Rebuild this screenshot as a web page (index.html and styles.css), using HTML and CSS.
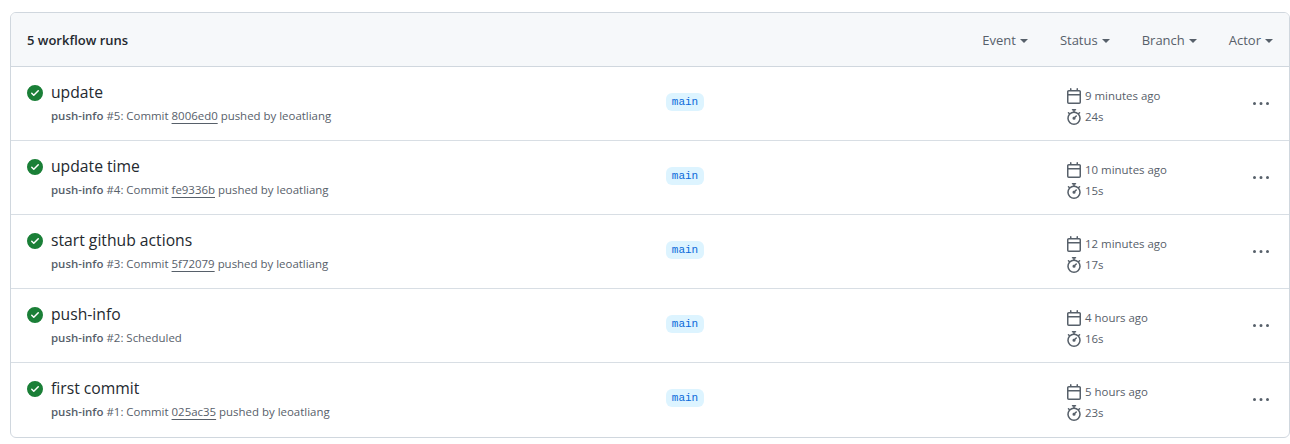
FILE: index.html
```html
<!DOCTYPE html>
<html lang="en">
<head>
<meta charset="utf-8">
<title>Workflow runs</title>
<link rel="stylesheet" href="styles.css">
</head>
<body>
<svg class="defs" width="0" height="0" aria-hidden="true">
  <symbol id="i-check" viewBox="0 0 16 16"><path d="M8 16A8 8 0 1 1 8 0a8 8 0 0 1 0 16Zm3.78-9.72a.751.751 0 0 0-.018-1.042.751.751 0 0 0-1.042-.018L6.75 9.19 5.28 7.72a.751.751 0 0 0-1.042.018.751.751 0 0 0-.018 1.042l2 2a.75.75 0 0 0 1.06 0Z"/></symbol>
  <symbol id="i-cal" viewBox="0 0 16 16"><path d="M4.75 0a.75.75 0 0 1 .75.75V2h5V.75a.75.75 0 0 1 1.5 0V2h1.25c.966 0 1.75.784 1.75 1.75v10.5A1.75 1.75 0 0 1 13.25 16H2.75A1.75 1.75 0 0 1 1 14.25V3.75C1 2.784 1.784 2 2.75 2H4V.75A.75.75 0 0 1 4.75 0ZM2.5 7.5v6.75c0 .138.112.25.25.25h10.5a.25.25 0 0 0 .25-.25V7.5Zm10.75-4H2.75a.25.25 0 0 0-.25.25V6h11V3.75a.25.25 0 0 0-.25-.25Z"/></symbol>
  <symbol id="i-watch" viewBox="0 0 16 16"><path d="M5.75.75A.75.75 0 0 1 6.5 0h3a.75.75 0 0 1 0 1.5h-.75v1l-.001.041a6.724 6.724 0 0 1 3.464 1.435l.007-.006.75-.75a.75.75 0 1 1 1.06 1.06l-.75.75-.006.007a6.75 6.75 0 1 1-10.548 0L2.72 5.03l-.75-.75a.751.751 0 0 1 .018-1.042.751.751 0 0 1 1.042-.018l.75.75.007.006A6.72 6.72 0 0 1 7.25 2.541a.49.49 0 0 1 0-.041v-1H6.5a.75.75 0 0 1-.75-.75ZM8 14.5a5.25 5.25 0 1 0-.001-10.501A5.25 5.25 0 0 0 8 14.5Zm.389-6.7 1.33-1.33a.75.75 0 1 1 1.061 1.06L9.45 8.861A1.503 1.503 0 0 1 8 10.75a1.499 1.499 0 1 1 .389-2.95Z"/></symbol>
  <symbol id="i-kebab" viewBox="0 0 16 16"><path d="M8 9a1.5 1.5 0 1 0 0-3 1.5 1.5 0 0 0 0 3ZM1.5 9a1.5 1.5 0 1 0 0-3 1.5 1.5 0 0 0 0 3Zm13 0a1.5 1.5 0 1 0 0-3 1.5 1.5 0 0 0 0 3Z"/></symbol>
</svg>
<section class="box">
  <header class="box-head">
    <h2 class="count">5 workflow runs</h2>
    <nav class="filters">
      <span class="filter">Event<i class="caret"></i></span>
      <span class="filter">Status<i class="caret"></i></span>
      <span class="filter">Branch<i class="caret"></i></span>
      <span class="filter">Actor<i class="caret"></i></span>
    </nav>
  </header>

  <article class="run">
    <svg class="status"><use href="#i-check"/></svg>
    <div class="info">
      <div class="title">update</div>
      <div class="meta"><b>push-info</b> #5: Commit <a class="sha">8006ed0</a> pushed by leoatliang</div>
    </div>
    <div class="branch-cell"><span class="branch">main</span></div>
    <div class="times">
      <div class="time"><svg class="ico"><use href="#i-cal"/></svg>9 minutes ago</div>
      <div class="time"><svg class="ico"><use href="#i-watch"/></svg>24s</div>
    </div>
    <svg class="kebab"><use href="#i-kebab"/></svg>
  </article>

  <article class="run">
    <svg class="status"><use href="#i-check"/></svg>
    <div class="info">
      <div class="title">update time</div>
      <div class="meta"><b>push-info</b> #4: Commit <a class="sha">fe9336b</a> pushed by leoatliang</div>
    </div>
    <div class="branch-cell"><span class="branch">main</span></div>
    <div class="times">
      <div class="time"><svg class="ico"><use href="#i-cal"/></svg>10 minutes ago</div>
      <div class="time"><svg class="ico"><use href="#i-watch"/></svg>15s</div>
    </div>
    <svg class="kebab"><use href="#i-kebab"/></svg>
  </article>

  <article class="run">
    <svg class="status"><use href="#i-check"/></svg>
    <div class="info">
      <div class="title">start github actions</div>
      <div class="meta"><b>push-info</b> #3: Commit <a class="sha">5f72079</a> pushed by leoatliang</div>
    </div>
    <div class="branch-cell"><span class="branch">main</span></div>
    <div class="times">
      <div class="time"><svg class="ico"><use href="#i-cal"/></svg>12 minutes ago</div>
      <div class="time"><svg class="ico"><use href="#i-watch"/></svg>17s</div>
    </div>
    <svg class="kebab"><use href="#i-kebab"/></svg>
  </article>

  <article class="run">
    <svg class="status"><use href="#i-check"/></svg>
    <div class="info">
      <div class="title">push-info</div>
      <div class="meta"><b>push-info</b> #2: Scheduled</div>
    </div>
    <div class="branch-cell"><span class="branch">main</span></div>
    <div class="times">
      <div class="time"><svg class="ico"><use href="#i-cal"/></svg>4 hours ago</div>
      <div class="time"><svg class="ico"><use href="#i-watch"/></svg>16s</div>
    </div>
    <svg class="kebab"><use href="#i-kebab"/></svg>
  </article>

  <article class="run">
    <svg class="status"><use href="#i-check"/></svg>
    <div class="info">
      <div class="title">first commit</div>
      <div class="meta"><b>push-info</b> #1: Commit <a class="sha">025ac35</a> pushed by leoatliang</div>
    </div>
    <div class="branch-cell"><span class="branch">main</span></div>
    <div class="times">
      <div class="time"><svg class="ico"><use href="#i-cal"/></svg>5 hours ago</div>
      <div class="time"><svg class="ico"><use href="#i-watch"/></svg>23s</div>
    </div>
    <svg class="kebab"><use href="#i-kebab"/></svg>
  </article>
</section>
</body>
</html>
```

FILE: styles.css
```css
* { box-sizing: border-box; }
html, body { background: #fff; }
body {
  margin: 0;
  padding: 12px 0 0 10px;
  font-family: "Open Sans", "Noto Sans", "Liberation Sans", sans-serif;
  color: #24292f;
}
.defs { position: absolute; }
.box {
  width: 1280px;
  height: 426px;
  border: 1px solid #d0d7de;
  border-radius: 6px;
  overflow: hidden;
}
.box-head {
  height: 54px;
  padding: 0 16px;
  background: #f6f8fa;
  border-bottom: 1px solid #d0d7de;
  display: flex;
  align-items: center;
  justify-content: space-between;
}
.count { margin: 0; font-size: 13px; font-weight: 600; }
.filters { display: flex; gap: 32px; }
.filter {
  font-size: 13px;
  color: #57606a;
  display: flex;
  align-items: center;
}
.caret {
  margin-left: 4px;
  margin-top: 2px;
  border: 4px solid transparent;
  border-top-color: #57606a;
  border-bottom: 0;
}
.run {
  height: 74px;
  padding: 0 16px;
  border-bottom: 1px solid #d8dee4;
  display: grid;
  grid-template-columns: 24px 615px 400px 170px 1fr;
  grid-template-rows: 73px;
  align-content: start;
  align-items: center;
}
.run:last-child { border-bottom: 0; }
.status { width: 16px; height: 16px; fill: #1a7f37; align-self: start; margin-top: 18px; }
.title { font-size: 15.7px; font-weight: 400; line-height: 20px; }
.meta { font-size: 11.45px; line-height: 18px; color: #57606a; margin-top: 5px; }
.meta b { font-weight: 600; }
.sha { text-decoration: underline; text-underline-offset: 3px; }
.branch-cell { margin-top: -3px; }
.branch {
  display: block;
  width: 38px;
  font-family: "Liberation Mono", "DejaVu Sans Mono", monospace;
  font-size: 11px;
  line-height: 18px;
  text-align: center;
  color: #0969da;
  background: #ddf4ff;
  border-radius: 6px;
}
.times { display: flex; flex-direction: column; gap: 3px; margin-top: 6px; }
.time {
  display: flex;
  align-items: center;
  gap: 3px;
  font-size: 11.45px;
  line-height: 18px;
  color: #57606a;
}
.ico { width: 16px; height: 16px; fill: #57606a; }
.kebab { width: 16px; height: 16px; fill: #57606a; justify-self: end; margin-right: 4px; }
```
